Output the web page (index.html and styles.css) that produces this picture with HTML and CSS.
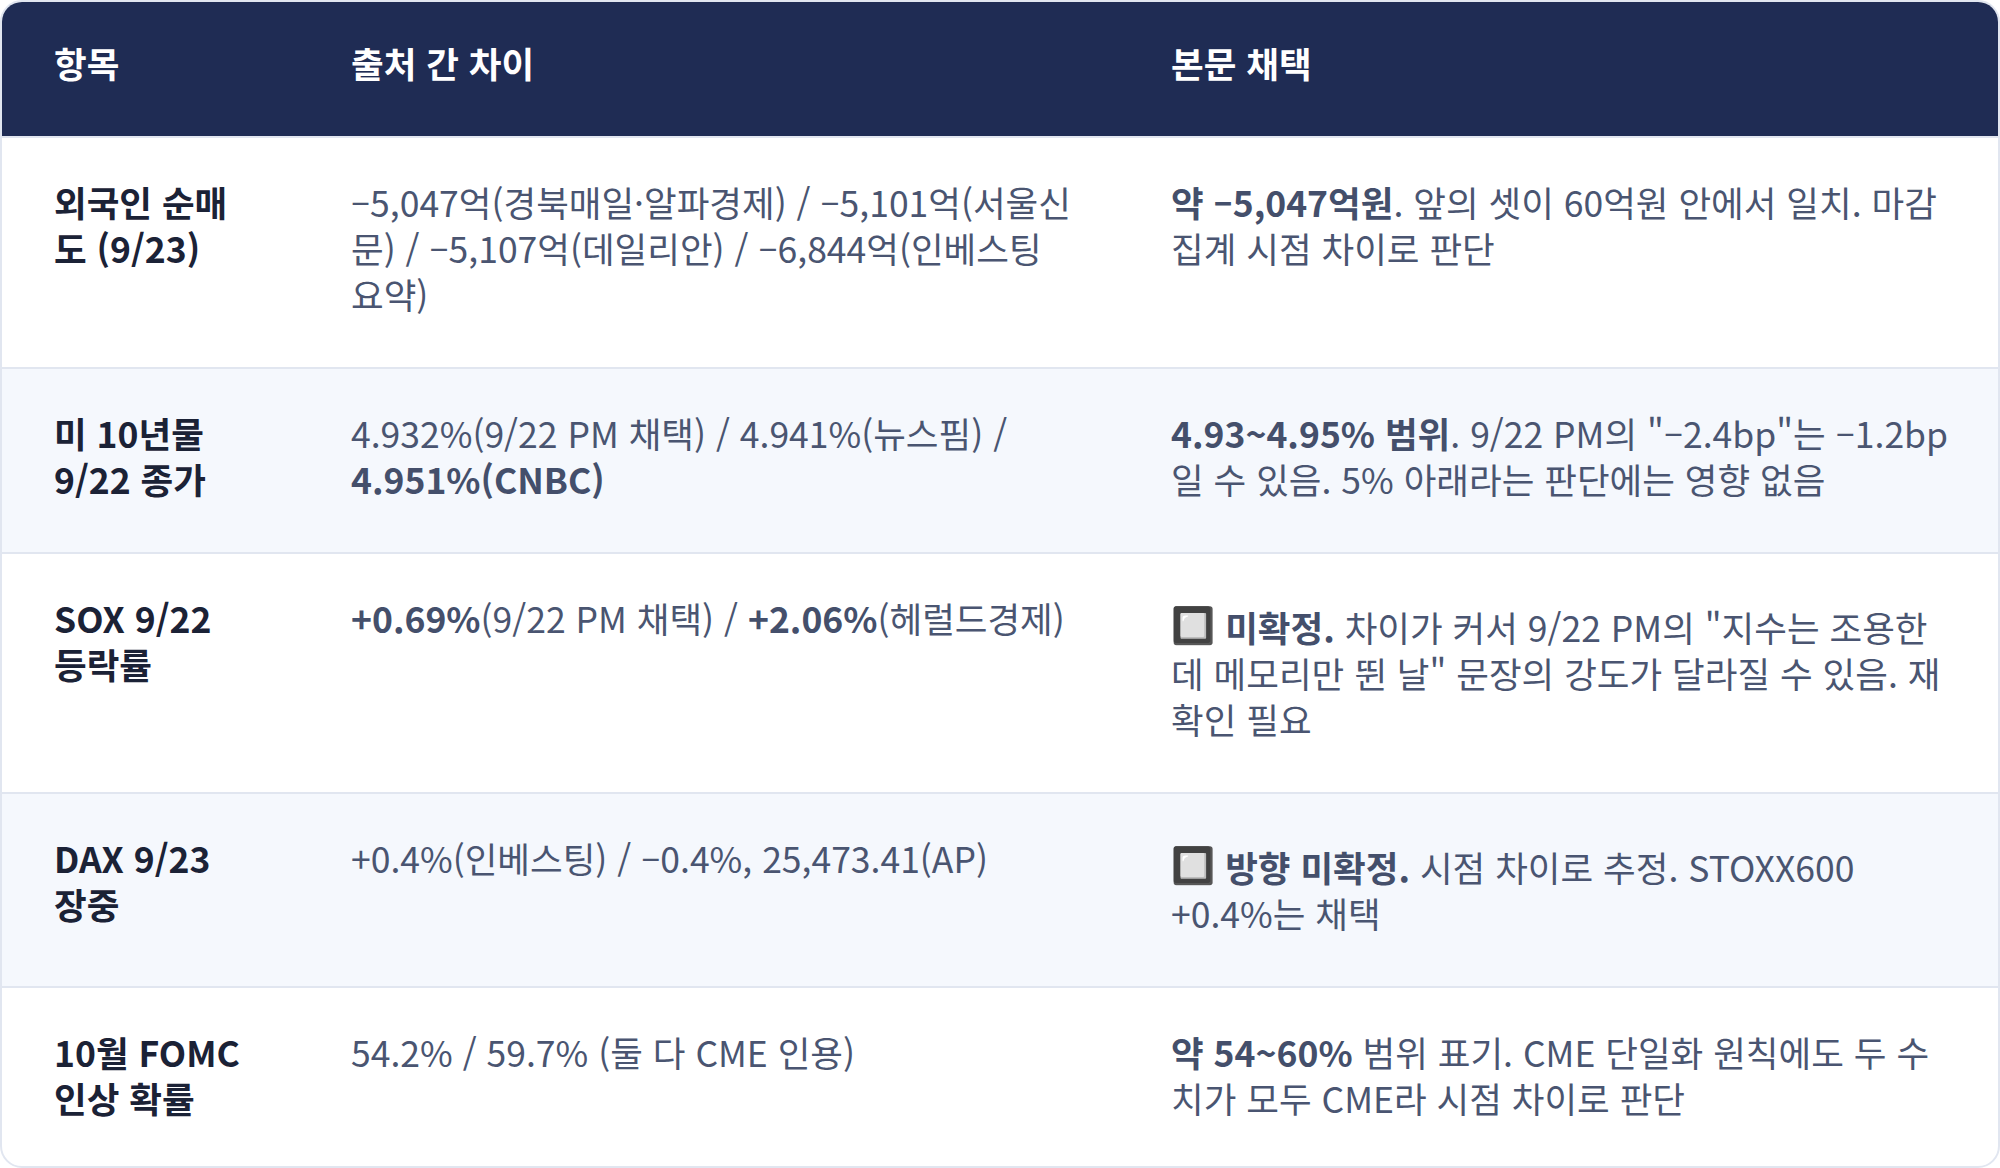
FILE: index.html
```html
<!DOCTYPE html>
<html lang="ko">
<head>
<meta charset="utf-8">
<title>출처 간 차이</title>
<link rel="stylesheet" href="styles.css">
</head>
<body>
<div class="card">
  <table class="grid">
    <colgroup>
      <col class="c1">
      <col class="c2">
      <col class="c3">
    </colgroup>
    <thead>
      <tr>
        <th>항목</th>
        <th>출처 간 차이</th>
        <th>본문 채택</th>
      </tr>
    </thead>
    <tbody>
      <tr>
        <td class="item">외국인 순매도 (9/23)</td>
        <td class="src">–5,047억(경북매일·알파경제) / –5,101억(서울신문) / –5,107억(데일리안) / –6,844억(인베스팅 요약)</td>
        <td class="adopt"><b>약 –5,047억원</b>. 앞의 셋이 60억원 안에서 일치. 마감 집계 시점 차이로 판단</td>
      </tr>
      <tr>
        <td class="item">미 10년물 9/22 종가</td>
        <td class="src">4.932%(9/22 PM 채택) / 4.941%(뉴스핌) / <b>4.951%(CNBC)</b></td>
        <td class="adopt"><b>4.93~4.95% 범위</b>. 9/22 PM의 "–2.4bp"는 –1.2bp 일 수 있음. 5% 아래라는 판단에는 영향 없음</td>
      </tr>
      <tr>
        <td class="item">SOX 9/22 등락률</td>
        <td class="src"><b>+0.69%</b>(9/22 PM 채택) / <b>+2.06%</b>(헤럴드경제)</td>
        <td class="adopt"><span class="emo">🔲</span> <b>미확정.</b> 차이가 커서 9/22 PM의 "지수는 조용한데 메모리만 뛴 날" 문장의 강도가 달라질 수 있음. 재확인 필요</td>
      </tr>
      <tr>
        <td class="item">DAX 9/23 장중</td>
        <td class="src">+0.4%(인베스팅) / –0.4%, 25,473.41(AP)</td>
        <td class="adopt"><span class="emo">🔲</span> <b>방향 미확정.</b> 시점 차이로 추정. STOXX600 +0.4%는 채택</td>
      </tr>
      <tr>
        <td class="item">10월 FOMC 인상 확률</td>
        <td class="src">54.2% / 59.7% (둘 다 CME 인용)</td>
        <td class="adopt"><b>약 54~60%</b> 범위 표기. CME 단일화 원칙에도 두 수치가 모두 CME라 시점 차이로 판단</td>
      </tr>
    </tbody>
  </table>
</div>
</body>
</html>
```

FILE: styles.css
```css
html, body {
  margin: 0;
  padding: 0;
  background: #ffffff;
}

body {
  font-family: "Noto Sans CJK KR", "Noto Sans", sans-serif;
  color: #4a5571;
}

.card {
  width: 2000px;
  height: 1168px;
  box-sizing: border-box;
  border: 2px solid #e1e6f0;
  border-radius: 22px;
  overflow: hidden;
  background: #ffffff;
}

.grid {
  width: 100%;
  border-collapse: collapse;
  table-layout: fixed;
}

.c1 { width: 297px; }
.c2 { width: 820px; }
.c3 { width: auto; }

.grid th,
.grid td {
  text-align: left;
  vertical-align: top;
  padding: 41px 52px 50px;
  font-size: 35.5px;
  line-height: 46px;
}

.grid th {
  background: #1f2c54;
  color: #ffffff;
  font-weight: 700;
  line-height: 47px;
  padding-top: 37px;
  padding-bottom: 50px;
}

.grid td {
  font-weight: 400;
  color: #4a5571;
}

.grid td.src {
  padding-right: 40px;
}

.grid td.adopt {
  padding-right: 44px;
}

.grid tbody tr {
  border-top: 2px solid #e1e6f0;
}

.grid tbody tr:nth-child(even) td {
  background: #f5f8fd;
}

.grid td.item {
  font-weight: 700;
  color: #1b2236;
}

.grid td b {
  font-weight: 700;
  color: #444f6b;
}

.emo {
  display: inline-block;
  font-family: "Noto Color Emoji", sans-serif;
  line-height: 46px;
  padding-top: 8px;
  vertical-align: 4px;
}
```
